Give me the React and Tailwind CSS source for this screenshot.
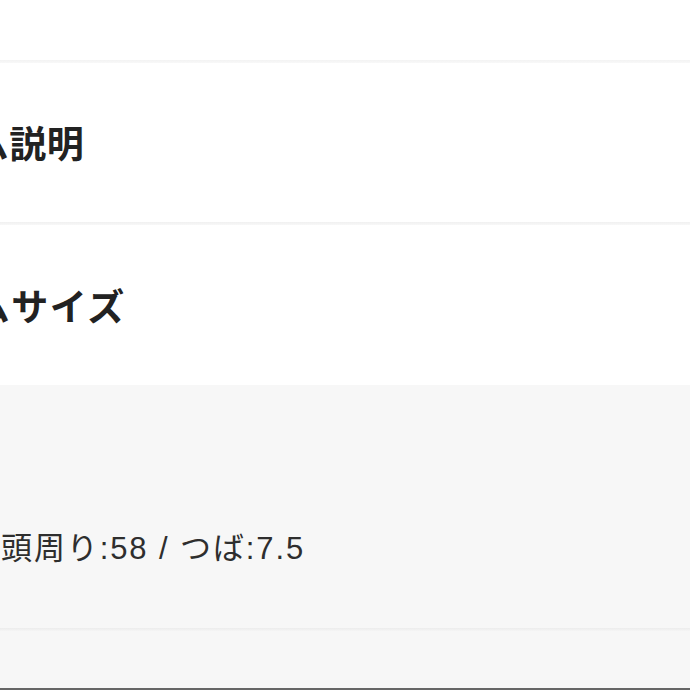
export default function App() {
  const jp = { fontFamily: '"Noto Sans CJK JP", "Noto Sans", sans-serif' };
  const body = { fontFamily: '"Liberation Sans", "Noto Sans CJK JP", sans-serif' };
  return (
    <div className="w-[690px] h-[690px] overflow-hidden flex flex-col bg-white" style={jp}>
      <div className="h-[60px] shrink-0 bg-white" />
      <div className="h-[3px] shrink-0 bg-gradient-to-b from-[#f3f3f3] to-[#f8f8f8]" />
      <div className="h-[159px] shrink-0 bg-white flex items-center overflow-hidden">
        <h2 className="ml-[-137px] whitespace-nowrap text-[37px] leading-none font-bold tracking-[0.5px] text-[#222]">アイテム説明</h2>
      </div>
      <div className="h-[3px] shrink-0 bg-gradient-to-b from-[#f0f0f0] to-[#f8f8f8]" />
      <div className="h-[160px] shrink-0 bg-white flex items-center overflow-hidden">
        <h2 className="ml-[-139px] whitespace-nowrap text-[37px] leading-none font-bold tracking-[1.5px] text-[#222]">アイテムサイズ</h2>
      </div>
      <div className="h-[243px] shrink-0 bg-[#f7f7f7] flex items-center pt-[84px] overflow-hidden">
        <p className="ml-[1px] whitespace-nowrap text-[31px] leading-none tracking-[1.9px] text-[#2e2e2e]" style={body}>頭周り:58 / つば:7.5</p>
      </div>
      <div className="h-[3px] shrink-0 bg-gradient-to-b from-[#ececec] to-[#f5f5f5]" />
      <div className="flex-1 bg-[#f7f7f7]" />
      <div className="h-[2px] shrink-0 bg-[#666]" />
    </div>
  );
}
